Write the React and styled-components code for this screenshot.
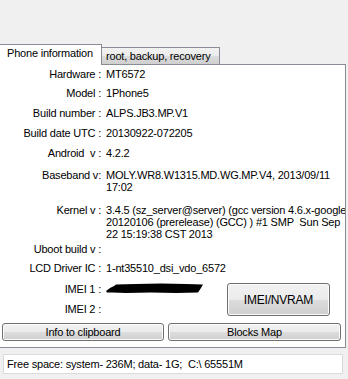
import React from "react";
import styled, { createGlobalStyle } from "styled-components";

const GlobalStyle = createGlobalStyle`
  html, body {
    margin: 0;
    padding: 0;
    background: #f0f0f0;
  }
  body {
    font-family: "Liberation Sans", Arial, sans-serif;
    font-size: 11px;
    line-height: 12px;
    letter-spacing: -0.2px;
    color: #000;
    overflow: hidden;
  }
`;

const Window = styled.div`
  width: 348px;
  height: 379px;
  padding-top: 44px;
  box-sizing: border-box;
`;

const TabStrip = styled.div`
  display: flex;
  align-items: flex-end;
  height: 21px;
  position: relative;
  z-index: 1;
`;

const Tab = styled.div`
  box-sizing: border-box;
  border: 1px solid #898c95;
  border-bottom: none;
  white-space: nowrap;
  margin-left: -1px;
  ${(p) =>
    p.$active
      ? `
    width: 103px;
    height: 21px;
    padding: 2px 0 0 7px;
    background: #fff;
    position: relative;
    z-index: 2;
  `
      : `
    width: 119px;
    height: 17px;
    margin-bottom: 1px;
    padding: 2px 0 0 4px;
    background: linear-gradient(#f2f2f2 0%, #ebebeb 50%, #dddddd 50%, #cfcfcf 100%);
  `}
`;

const Panel = styled.div`
  box-sizing: border-box;
  width: 347px;
  height: 284px;
  margin: -1px 0 0 -1px;
  border: 1px solid #898c95;
  background: #fff;
  padding-top: 3px;
`;

const Row = styled.div`
  display: grid;
  grid-template-columns: 101px 1fr;
  column-gap: 5px;
  height: ${(p) => p.$h}px;
`;

const Label = styled.div`
  text-align: right;
  white-space: pre;
`;

const Value = styled.div`
  white-space: pre;
  overflow: hidden;
`;

const ImeiBlock = styled.div`
  display: flex;
  align-items: flex-start;
  height: 40px;
`;

const ImeiRows = styled.div`
  flex: 1;
  display: flex;
  flex-direction: column;
`;

const Button = styled.button`
  box-sizing: border-box;
  flex: none;
  font-family: "Liberation Sans", Arial, sans-serif;
  font-size: 11px;
  letter-spacing: -0.2px;
  color: #000;
  padding: 0;
  border: 1px solid #707070;
  border-radius: 3px;
  background: linear-gradient(#f2f2f2 0%, #ebebeb 50%, #dddddd 50%, #cfcfcf 100%);
  box-shadow: inset 0 0 0 1px #fbfbfb;
  width: ${(p) => p.$w}px;
  height: ${(p) => p.$h}px;
`;

const BigButton = styled(Button)`
  margin-right: 15px;
  font-size: 12px;
`;

const ButtonRow = styled.div`
  display: flex;
  gap: 4px;
  padding-left: 2px;
`;

const StatusBox = styled.div`
  box-sizing: border-box;
  width: 340px;
  height: 20px;
  margin: 6px 0 0 3px;
  border: 1px solid #dadada;
  background: #fff;
  padding: 3px 0 0 3px;
  white-space: pre;
`;

const Redacted = () => (
  <svg width="98" height="11" viewBox="0 0 98 11" style={{ display: "block", marginTop: 0 }}>
    <path
      d="M0 8 L4 5 L8 3 L10 1.5 L30 1 L55 0.5 L80 1 L97 1.5 L95 5 L92 9.5 L70 10 L45 9.5 L20 10 L6 9.5 L1 9.5 Z"
      fill="#000"
    />
  </svg>
);

const rows = [
  { label: "Hardware :", h: 19, lines: ["MT6572"] },
  { label: "Model :", h: 20, lines: ["1Phone5"] },
  { label: "Build number :", h: 20, lines: ["ALPS.JB3.MP.V1"] },
  { label: "Build date UTC :", h: 20, lines: ["20130922-072205"] },
  { label: "Android  v :", h: 22, lines: ["4.2.2"] },
  {
    label: "Baseband v:",
    h: 35,
    lines: ["MOLY.WR8.W1315.MD.WG.MP.V4, 2013/09/11", "17:02"],
  },
  {
    label: "Kernel v :",
    h: 39,
    lines: [
      "3.4.5 (sz_server@server) (gcc version 4.6.x-google",
      "20120106 (prerelease) (GCC) ) #1 SMP  Sun Sep",
      "22 15:19:38 CST 2013",
    ],
  },
  { label: "Uboot build v :", h: 19, lines: [""] },
  { label: "LCD Driver IC :", h: 21, lines: ["1-nt35510_dsi_vdo_6572"] },
];

export default function App() {
  return (
    <Window>
      <GlobalStyle />
      <TabStrip>
        <Tab $active>Phone information</Tab>
        <Tab>root, backup, recovery</Tab>
      </TabStrip>
      <Panel>
        {rows.map((r) => (
          <Row key={r.label} $h={r.h}>
            <Label>{r.label}</Label>
            <Value>
              {r.lines.map((l, i) => (
                <div key={i}>{l}</div>
              ))}
            </Value>
          </Row>
        ))}
        <ImeiBlock>
          <ImeiRows>
            <Row $h={20}>
              <Label>IMEI 1 :</Label>
              <Value>
                <Redacted />
              </Value>
            </Row>
            <Row $h={20}>
              <Label>IMEI 2 :</Label>
              <Value />
            </Row>
          </ImeiRows>
          <BigButton $w={103} $h={33}>IMEI/NVRAM</BigButton>
        </ImeiBlock>
        <ButtonRow>
          <Button $w={162} $h={18}>Info to clipboard</Button>
          <Button $w={173} $h={18}>Blocks Map</Button>
        </ButtonRow>
      </Panel>
      <StatusBox>Free space: system- 236M; data- 1G;  C:\ 65551M</StatusBox>
    </Window>
  );
}
